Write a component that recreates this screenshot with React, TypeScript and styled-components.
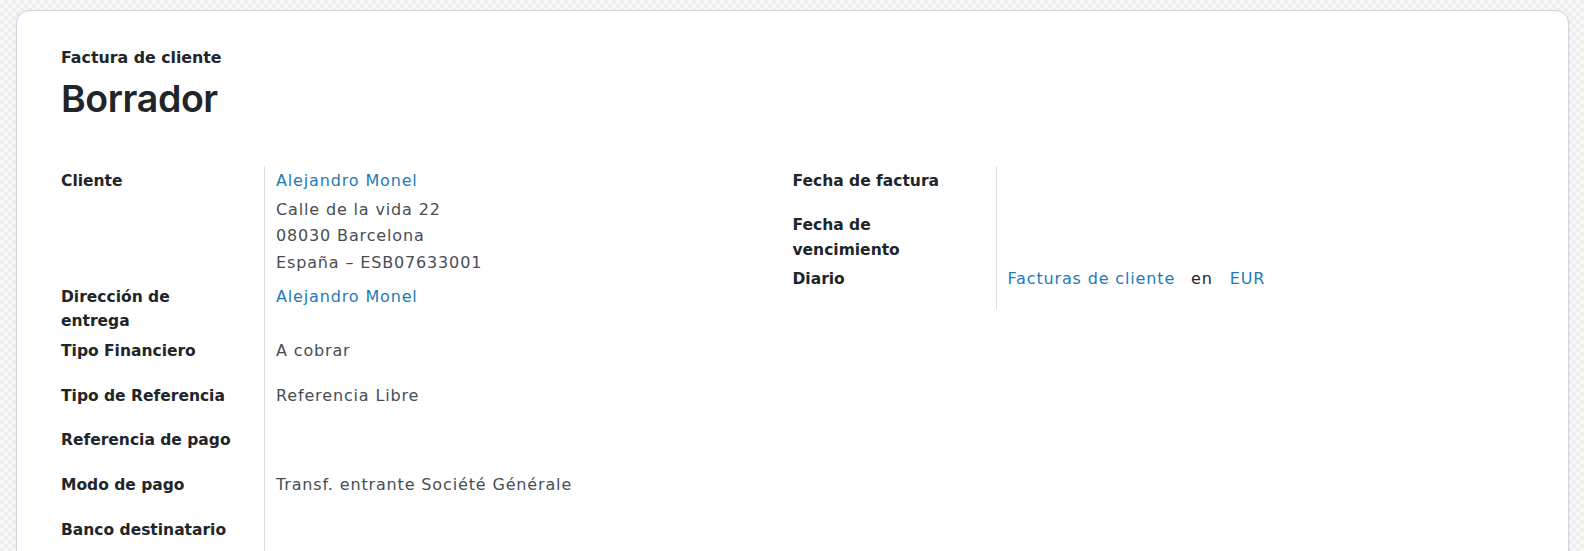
import React from "react";
import styled, { createGlobalStyle } from "styled-components";

const GlobalStyle = createGlobalStyle`
  html, body {
    margin: 0;
    padding: 0;
  }
  body {
    font-family: "DejaVu Sans", "Noto Sans", sans-serif;
    color: #212529;
    background: repeating-conic-gradient(#eeeeee 0 25%, #f7f7f7 0 50%) 0 0 / 8px 8px;
    overflow: hidden;
  }
`;

const Page = styled.div`
  height: 551px;
  padding: 10px 15px 0 16px;
  box-sizing: border-box;
`;

const Sheet = styled.div`
  background: #ffffff;
  border: 1px solid #d3d0e0;
  border-radius: 13px;
  box-shadow: 0 1px 3px rgba(60, 50, 90, 0.08);
  padding: 35px 44px 0 44px;
  height: 560px;
  box-sizing: border-box;
  overflow: hidden;
`;

const Subtitle = styled.div`
  font-weight: 700;
  font-size: 15.8px;
  line-height: 24px;
  color: #212529;
`;

const Title = styled.h1`
  margin: 7px 0 0 0;
  font-family: Inter, "DejaVu Sans", sans-serif;
  font-weight: 600;
  font-size: 37.5px;
  letter-spacing: -0.4px;
  line-height: 44px;
  color: #212529;
`;

const Groups = styled.div`
  display: grid;
  grid-template-columns: 1fr 1fr;
  margin-top: 44.5px;
  align-items: start;
`;

const Group = styled.div`
  display: grid;
  grid-template-columns: 203px 1fr;
  align-content: start;
`;

const Label = styled.div`
  padding: 3px 28px 2px 0;
  min-height: 39.9px;
  font-weight: 700;
  font-size: 15.5px;
  line-height: 24.3px;
  color: #212529;
`;

const Value = styled.div<{ $grow?: boolean }>`
  border-left: 1px solid #dcdcdc;
  padding: 3px 0 2px 11px;
  min-height: ${(p) => (p.$grow ? "200px" : "39.9px")};
  font-size: 16px;
  letter-spacing: 0.85px;
  line-height: 24px;
  color: #484d55;
`;

const Link = styled.a`
  color: #1f7ab8;
  text-decoration: none;
  cursor: pointer;
`;

const Address = styled.div`
  margin: 4px 0 3.5px;
  line-height: 26.7px;
`;

const Inline = styled.div`
  display: flex;
  align-items: baseline;
`;

const Connector = styled.span`
  margin: 0 17px 0 16px;
  color: #212529;
`;

export default function App() {
  return (
    <>
      <GlobalStyle />
      <Page>
        <Sheet>
          <Subtitle>Factura de cliente</Subtitle>
          <Title>Borrador</Title>
          <Groups>
            <Group>
              <Label>Cliente</Label>
              <Value>
                <Link>Alejandro Monel</Link>
                <Address>
                  Calle de la vida 22
                  <br />
                  08030 Barcelona
                  <br />
                  España – ESB07633001
                </Address>
              </Value>
              <Label>Dirección de entrega</Label>
              <Value>
                <Link>Alejandro Monel</Link>
              </Value>
              <Label>Tipo Financiero</Label>
              <Value>A cobrar</Value>
              <Label>Tipo de Referencia</Label>
              <Value>Referencia Libre</Value>
              <Label>Referencia de pago</Label>
              <Value />
              <Label>Modo de pago</Label>
              <Value>Transf. entrante Société Générale</Value>
              <Label>Banco destinatario</Label>
              <Value $grow />
            </Group>
            <Group>
              <Label>Fecha de factura</Label>
              <Value />
              <Label>Fecha de vencimiento</Label>
              <Value />
              <Label>Diario</Label>
              <Value>
                <Inline>
                  <Link>Facturas de cliente</Link>
                  <Connector>en</Connector>
                  <Link>EUR</Link>
                </Inline>
              </Value>
            </Group>
          </Groups>
        </Sheet>
      </Page>
    </>
  );
}
